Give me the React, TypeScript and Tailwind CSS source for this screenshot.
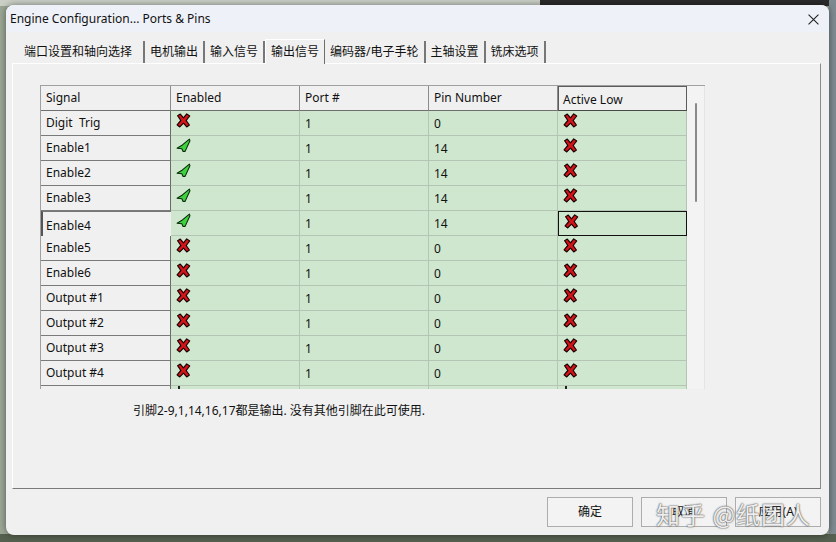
type Row = { signal: string; enabled: boolean; port: number; pin: number; activeLow: boolean }

const rows: Row[] = [
  { signal: 'Digit  Trig', enabled: false, port: 1, pin: 0, activeLow: false },
  { signal: 'Enable1', enabled: true, port: 1, pin: 14, activeLow: false },
  { signal: 'Enable2', enabled: true, port: 1, pin: 14, activeLow: false },
  { signal: 'Enable3', enabled: true, port: 1, pin: 14, activeLow: false },
  { signal: 'Enable4', enabled: true, port: 1, pin: 14, activeLow: false },
  { signal: 'Enable5', enabled: false, port: 1, pin: 0, activeLow: false },
  { signal: 'Enable6', enabled: false, port: 1, pin: 0, activeLow: false },
  { signal: 'Output #1', enabled: false, port: 1, pin: 0, activeLow: false },
  { signal: 'Output #2', enabled: false, port: 1, pin: 0, activeLow: false },
  { signal: 'Output #3', enabled: false, port: 1, pin: 0, activeLow: false },
  { signal: 'Output #4', enabled: false, port: 1, pin: 0, activeLow: false },
]

const tabs = ['端口设置和轴向选择', '电机输出', '输入信号', '输出信号', '编码器/电子手轮', '主轴设置', '铣床选项']

function RedX() {
  return (
    <svg width="15" height="15" viewBox="0 0 14 14">
      <polygon
        points="1.5,2.5 4,1 7,4.5 10,0.8 12.8,2.8 9.5,7 12.5,11.2 10,13 7,9.5 3.5,13 1,11 4.5,7"
        fill="#d0141a"
        stroke="#1a0000"
        strokeWidth="1.1"
        strokeLinejoin="round"
      />
    </svg>
  )
}

function GreenCheck() {
  return (
    <svg width="15" height="15" viewBox="0 0 14 14">
      <polygon
        points="1,9.5 6,6.5 12.5,1 13,2.5 8.5,12.5 6.5,12.5 5.5,10"
        fill="#3fd23f"
        stroke="#0a2a0a"
        strokeWidth="1"
        strokeLinejoin="round"
      />
    </svg>
  )
}

function Mark({ on }: { on: boolean }) {
  return <div className="pl-[5px] pt-[2px]">{on ? <GreenCheck /> : <RedX />}</div>
}

export default function App() {
  const font = { fontFamily: '"Noto Sans", "Noto Sans CJK SC", sans-serif' }
  return (
    <div className="w-[836px] h-[542px] overflow-hidden bg-[#9aa594] relative" style={font}>
      {/* strip of the main window behind the dialog */}
      <div className="absolute left-0 top-0 w-[540px] h-[6px] bg-[#c9cfc5]" />
      <div className="absolute left-[540px] top-0 w-[296px] h-[6px] bg-[#2b2b2b]" />
      <div className="absolute right-0 top-0 w-[7px] h-[542px] bg-[#7d8a8f]" />
      <div className="absolute left-0 bottom-0 w-[836px] h-[8px] bg-[#56604f]" />

      <div className="absolute left-[6px] top-[5px] w-[823px] h-[530px] rounded-lg bg-[#f0f0f0] shadow-[0_0_6px_rgba(0,0,0,0.45)] flex flex-col overflow-hidden">
        {/* title bar */}
        <div className="h-[27px] bg-[#eef2f8] flex items-center justify-between pl-[4px] pr-[10px] shrink-0">
          <span className="text-[12px] text-[#111]">Engine Configuration... Ports &amp; Pins</span>
          <svg width="11" height="11" viewBox="0 0 10 10" className="mt-[1px]">
            <path d="M0.5 0.5 L9.5 9.5 M9.5 0.5 L0.5 9.5" stroke="#222" strokeWidth="1" />
          </svg>
        </div>

        {/* tabs */}
        <div className="flex items-end pl-[9px] h-[31px] shrink-0">
          {tabs.map((t, i) => {
            const active = i === 3
            return (
              <div
                key={t}
                className={
                  active
                    ? 'h-[25px] px-[5px] flex items-center bg-[#f0f0f0] border-t border-l border-white border-r border-r-[#6e6e6e] text-[12px] text-[#111] relative top-[1px] -mt-[2px]'
                    : i === 0
                    ? 'h-[22px] pl-[9px] pr-[11px] flex items-center border-r-2 border-[#777] text-[12px] text-[#111]'
                    : 'h-[22px] px-[5px] flex items-center border-r-2 border-[#777] text-[12px] text-[#111]'
                }
              >
                {t}
              </div>
            )
          })}
        </div>

        {/* tab page */}
        <div className="ml-[6px] w-[809px] h-[426px] border-t border-l border-white border-r border-b border-r-[#8a8a8a] border-b-[#7a7a7a] flex flex-col shrink-0">
          <div className="ml-[27px] mt-[21px] w-[665px] h-[304px] border-t border-l border-[#a0a0a0] flex overflow-hidden">
            <div className="w-[646px] flex flex-col">
              {/* header */}
              <div className="flex h-[25px] shrink-0 text-[12px] text-[#111]">
                {['Signal', 'Enabled', 'Port #', 'Pin Number'].map((h) => (
                  <div
                    key={h}
                    className={
                      (h === 'Signal' ? 'w-[130px]' : 'w-[129px]') +
                      ' border-r border-b border-r-[#8c8c8c] border-b-[#6f6f6f] bg-[#f0f0f0] pl-[5px] flex items-center'
                    }
                  >
                    {h}
                  </div>
                ))}
                <div className="w-[129px] border border-[#5c5c5c] border-b-[#4a4a4a] bg-[#f0f0f0] pl-[4px] flex items-center pt-[2px]">
                  Active Low
                </div>
              </div>

              {rows.map((r) => {
                const focus = r.signal === 'Enable4'
                return (
                  <div key={r.signal} className="flex h-[25px] shrink-0 text-[12px] text-[#111]">
                    <div
                      className={
                        focus
                          ? 'w-[130px] bg-[#f0f0f0] border-l-2 border-l-[#555] border-t border-t-[#777] pl-[3px] flex items-center pt-[3px]'
                          : 'w-[130px] bg-[#f0f0f0] border-r border-b border-r-[#6a6a6a] border-b-[#7a7a7a] pl-[5px] flex items-center'
                      }
                    >
                      <span className="whitespace-pre">{r.signal}</span>
                    </div>
                    <div className="w-[129px] bg-[#cfe7ce] border-r border-b border-[#b4c6b3]">
                      <Mark on={r.enabled} />
                    </div>
                    <div className="w-[129px] bg-[#cfe7ce] border-r border-b border-[#b4c6b3] pl-[5px] flex items-center pt-[2px]">
                      {r.port}
                    </div>
                    <div className="w-[129px] bg-[#cfe7ce] border-r border-b border-[#b4c6b3] pl-[5px] flex items-center pt-[2px]">
                      {r.pin}
                    </div>
                    <div
                      className={
                        focus
                          ? 'w-[129px] bg-[#cfe7ce] border border-[#111]'
                          : 'w-[129px] bg-[#cfe7ce] border-r border-b border-[#b4c6b3]'
                      }
                    >
                      <Mark on={r.activeLow} />
                    </div>
                  </div>
                )
              })}

              {/* next row, cut off by the grid's edge */}
              <div className="flex h-[4px] shrink-0">
                <div className="w-[130px] bg-[#f0f0f0] border-r border-r-[#6a6a6a]" />
                <div className="w-[129px] bg-[#cfe7ce] border-r border-[#b4c6b3] pl-[7px]">
                  <div className="w-[2px] h-[3px] bg-[#222]" />
                </div>
                <div className="w-[129px] bg-[#cfe7ce] border-r border-[#b4c6b3]" />
                <div className="w-[129px] bg-[#cfe7ce] border-r border-[#b4c6b3]" />
                <div className="w-[129px] bg-[#cfe7ce] border-r border-[#b4c6b3] pl-[7px]">
                  <div className="w-[2px] h-[3px] bg-[#222]" />
                </div>
              </div>
            </div>

            {/* vertical scrollbar */}
            <div className="w-[19px] bg-[#f3f3f3] border-r border-[#e4e4e4] flex justify-center pt-[17px]">
              <div className="w-[2px] h-[99px] bg-[#8a8a8a] rounded-full" />
            </div>
          </div>

          <div className="ml-[120px] mt-[13px] text-[12px] text-[#111]">
            引脚2-9,1,14,16,17都是输出. 没有其他引脚在此可使用.
          </div>
        </div>

        {/* dialog buttons */}
        <div className="flex justify-end gap-[8px] pr-[8px] pt-[8px] relative">
          {['确定', '取消', '应用(A)'].map((b) => (
            <div
              key={b}
              className="w-[86px] h-[30px] border border-[#adadad] bg-[#f3f3f3] flex items-center justify-center text-[12px] text-[#111]"
            >
              {b}
            </div>
          ))}
          <div
            className="absolute left-[650px] top-[7px] text-[24px] text-white/90 tracking-[1px] [text-shadow:0_0_2px_#555,0_0_1px_#333]"
            style={{ fontFamily: '"Noto Sans CJK SC", sans-serif' }}
          >
            知乎 @纸团人
          </div>
        </div>
      </div>
    </div>
  )
}
